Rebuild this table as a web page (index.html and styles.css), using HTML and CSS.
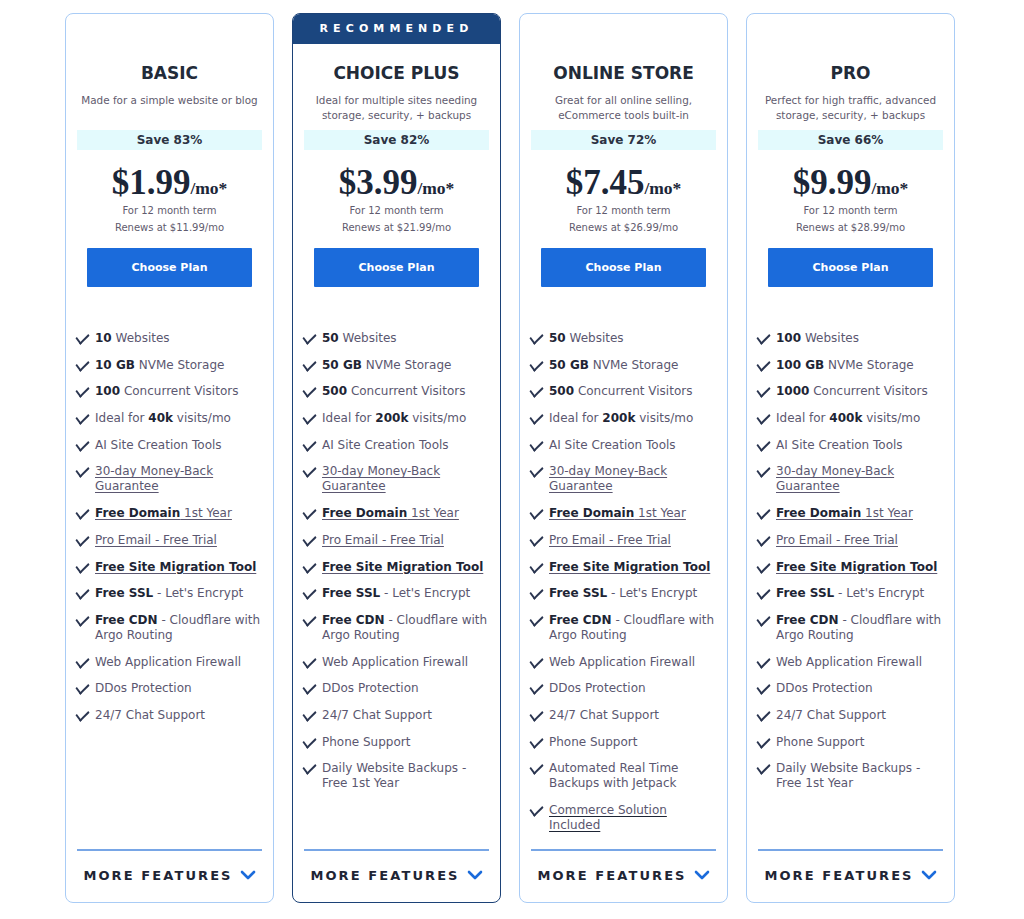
FILE: index.html
```html
<!DOCTYPE html>
<html lang="en">
<head>
<meta charset="utf-8">
<title>Plans</title>
<link rel="stylesheet" href="styles.css">
</head>
<body>
<div class="plans">

  <div class="card">
    <div class="ribbon ribbon-empty"></div>
    <div class="head">
      <h2 class="name">BASIC</h2>
      <p class="desc">Made for a simple website or blog</p>
      <div class="save">Save 83%</div>
      <div class="price"><span class="amt">$1.99</span><span class="per">/mo*</span></div>
      <p class="term">For 12 month term<br>Renews at $11.99/mo</p>
      <a class="btn">Choose Plan</a>
    </div>
    <ul class="features">
      <li><b>10</b> Websites</li>
      <li><b>10 GB</b> NVMe Storage</li>
      <li><b>100</b> Concurrent Visitors</li>
      <li>Ideal for <b>40k</b> visits/mo</li>
      <li>AI Site Creation Tools</li>
      <li><u>30-day Money-Back Guarantee</u></li>
      <li><u><b>Free Domain</b> 1st Year</u></li>
      <li><u>Pro Email - Free Trial</u></li>
      <li><u><b>Free Site Migration Tool</b></u></li>
      <li><b>Free SSL</b> - Let's Encrypt</li>
      <li><b>Free CDN</b> - Cloudflare with Argo Routing</li>
      <li>Web Application Firewall</li>
      <li>DDos Protection</li>
      <li>24/7 Chat Support</li>
    </ul>
    <div class="more">MORE FEATURES <svg class="chev" viewBox="0 0 16 10" width="16" height="10"><path d="M2 2l6 6 6-6" fill="none" stroke="currentColor" stroke-width="2.6" stroke-linecap="round" stroke-linejoin="round"/></svg></div>
  </div>

  <div class="card card-rec">
    <div class="ribbon">RECOMMENDED</div>
    <div class="head">
      <h2 class="name">CHOICE PLUS</h2>
      <p class="desc">Ideal for multiple sites needing storage, security, + backups</p>
      <div class="save">Save 82%</div>
      <div class="price"><span class="amt">$3.99</span><span class="per">/mo*</span></div>
      <p class="term">For 12 month term<br>Renews at $21.99/mo</p>
      <a class="btn">Choose Plan</a>
    </div>
    <ul class="features">
      <li><b>50</b> Websites</li>
      <li><b>50 GB</b> NVMe Storage</li>
      <li><b>500</b> Concurrent Visitors</li>
      <li>Ideal for <b>200k</b> visits/mo</li>
      <li>AI Site Creation Tools</li>
      <li><u>30-day Money-Back Guarantee</u></li>
      <li><u><b>Free Domain</b> 1st Year</u></li>
      <li><u>Pro Email - Free Trial</u></li>
      <li><u><b>Free Site Migration Tool</b></u></li>
      <li><b>Free SSL</b> - Let's Encrypt</li>
      <li><b>Free CDN</b> - Cloudflare with Argo Routing</li>
      <li>Web Application Firewall</li>
      <li>DDos Protection</li>
      <li>24/7 Chat Support</li>
      <li>Phone Support</li>
      <li>Daily Website Backups - Free 1st Year</li>
    </ul>
    <div class="more">MORE FEATURES <svg class="chev" viewBox="0 0 16 10" width="16" height="10"><path d="M2 2l6 6 6-6" fill="none" stroke="currentColor" stroke-width="2.6" stroke-linecap="round" stroke-linejoin="round"/></svg></div>
  </div>

  <div class="card">
    <div class="ribbon ribbon-empty"></div>
    <div class="head">
      <h2 class="name">ONLINE STORE</h2>
      <p class="desc">Great for all online selling, eCommerce tools built-in</p>
      <div class="save">Save 72%</div>
      <div class="price"><span class="amt">$7.45</span><span class="per">/mo*</span></div>
      <p class="term">For 12 month term<br>Renews at $26.99/mo</p>
      <a class="btn">Choose Plan</a>
    </div>
    <ul class="features">
      <li><b>50</b> Websites</li>
      <li><b>50 GB</b> NVMe Storage</li>
      <li><b>500</b> Concurrent Visitors</li>
      <li>Ideal for <b>200k</b> visits/mo</li>
      <li>AI Site Creation Tools</li>
      <li><u>30-day Money-Back Guarantee</u></li>
      <li><u><b>Free Domain</b> 1st Year</u></li>
      <li><u>Pro Email - Free Trial</u></li>
      <li><u><b>Free Site Migration Tool</b></u></li>
      <li><b>Free SSL</b> - Let's Encrypt</li>
      <li><b>Free CDN</b> - Cloudflare with Argo Routing</li>
      <li>Web Application Firewall</li>
      <li>DDos Protection</li>
      <li>24/7 Chat Support</li>
      <li>Phone Support</li>
      <li>Automated Real Time Backups with Jetpack</li>
      <li><u class="dark">Commerce Solution Included</u></li>
    </ul>
    <div class="more">MORE FEATURES <svg class="chev" viewBox="0 0 16 10" width="16" height="10"><path d="M2 2l6 6 6-6" fill="none" stroke="currentColor" stroke-width="2.6" stroke-linecap="round" stroke-linejoin="round"/></svg></div>
  </div>

  <div class="card">
    <div class="ribbon ribbon-empty"></div>
    <div class="head">
      <h2 class="name">PRO</h2>
      <p class="desc">Perfect for high traffic, advanced storage, security, + backups</p>
      <div class="save">Save 66%</div>
      <div class="price"><span class="amt">$9.99</span><span class="per">/mo*</span></div>
      <p class="term">For 12 month term<br>Renews at $28.99/mo</p>
      <a class="btn">Choose Plan</a>
    </div>
    <ul class="features">
      <li><b>100</b> Websites</li>
      <li><b>100 GB</b> NVMe Storage</li>
      <li><b>1000</b> Concurrent Visitors</li>
      <li>Ideal for <b>400k</b> visits/mo</li>
      <li>AI Site Creation Tools</li>
      <li><u>30-day Money-Back Guarantee</u></li>
      <li><u><b>Free Domain</b> 1st Year</u></li>
      <li><u>Pro Email - Free Trial</u></li>
      <li><u><b>Free Site Migration Tool</b></u></li>
      <li><b>Free SSL</b> - Let's Encrypt</li>
      <li><b>Free CDN</b> - Cloudflare with Argo Routing</li>
      <li>Web Application Firewall</li>
      <li>DDos Protection</li>
      <li>24/7 Chat Support</li>
      <li>Phone Support</li>
      <li>Daily Website Backups - Free 1st Year</li>
    </ul>
    <div class="more">MORE FEATURES <svg class="chev" viewBox="0 0 16 10" width="16" height="10"><path d="M2 2l6 6 6-6" fill="none" stroke="currentColor" stroke-width="2.6" stroke-linecap="round" stroke-linejoin="round"/></svg></div>
  </div>

</div>
</body>
</html>
```

FILE: styles.css
```css
* { box-sizing: border-box; }
html, body { margin: 0; padding: 0; background: #ffffff; }
body {
  font-family: "DejaVu Sans", "Noto Sans", sans-serif;
  color: #5b5770;
}
.plans {
  display: flex;
  gap: 18px;
  padding: 13px 0 0 65px;
}
.card {
  width: 209px;
  height: 890px;
  border: 1px solid #a9ccf6;
  border-radius: 8px;
  display: flex;
  flex-direction: column;
  overflow: hidden;
}
.card-rec { border-color: #1c4277; }
.ribbon {
  height: 30px;
  background: #1b467f;
  color: #ffffff;
  font-weight: bold;
  font-size: 11px;
  letter-spacing: 5.1px;
  text-align: center;
  line-height: 30px;
  padding-left: 0;
}
.ribbon-empty { background: transparent; }
.head {
  display: flex;
  flex-direction: column;
  align-items: center;
  padding: 0 11px;
}
.name {
  margin: 18px 0 0;
  font-size: 17px;
  line-height: 22px;
  color: #222b39;
  font-weight: bold;
}
.desc {
  margin: 9px 0 0;
  height: 30px;
  font-size: 10.4px;
  line-height: 15px;
  text-align: center;
  color: #5f5b6e;
  padding: 0 4px;
}
.save {
  margin-top: 7px;
  align-self: stretch;
  background: #e3fafd;
  height: 20px;
  line-height: 20px;
  text-align: center;
  font-size: 12px;
  font-weight: 600;
  color: #2c3344;
}
.price {
  margin-top: 15px;
  font-family: "Liberation Serif", "DejaVu Serif", serif;
  font-weight: bold;
  color: #1b2638;
  line-height: 36px;
  height: 36px;
}
.amt { font-size: 35px; }
.per { font-size: 17.5px; }
.term {
  margin: 1px 0 0;
  font-size: 10px;
  line-height: 17px;
  text-align: center;
  color: #5f5b6e;
}
.btn {
  margin-top: 12px;
  width: 165px;
  height: 39px;
  background: #1b6bdb;
  color: #ffffff;
  font-weight: bold;
  font-size: 11px;
  display: flex;
  align-items: center;
  justify-content: center;
  border-radius: 1px;
}
.features {
  list-style: none;
  margin: 44px 0 0;
  padding: 0 12px 0 29px;
  display: flex;
  flex-direction: column;
  gap: 11.7px;
  flex: 1;
}
.features li {
  position: relative;
  font-size: 12px;
  line-height: 15px;
  color: #5b5770;
}
.features li::before {
  content: "";
  position: absolute;
  left: -19px;
  top: 2px;
  width: 11px;
  height: 6px;
  border-left: 2px solid #2a3550;
  border-bottom: 2px solid #2a3550;
  transform: rotate(-45deg) skewX(-8deg);
  transform-origin: center;
}
.features b { color: #1e2535; font-weight: bold; }
.features u { text-decoration-thickness: 1px; text-underline-offset: 2px; }
.features u.dark { color: #5b5770; text-decoration-color: #1e2535; }
.more {
  margin: 0 11px 15px;
  border-top: 2px solid #78a6e6;
  height: 38px;
  padding-top: 12px;
  display: flex;
  justify-content: center;
  align-items: center;
  gap: 7px;
  font-size: 13px;
  font-weight: bold;
  letter-spacing: 2.1px;
  color: #1e2535;
}
.chev { color: #1b6bdb; }
```
